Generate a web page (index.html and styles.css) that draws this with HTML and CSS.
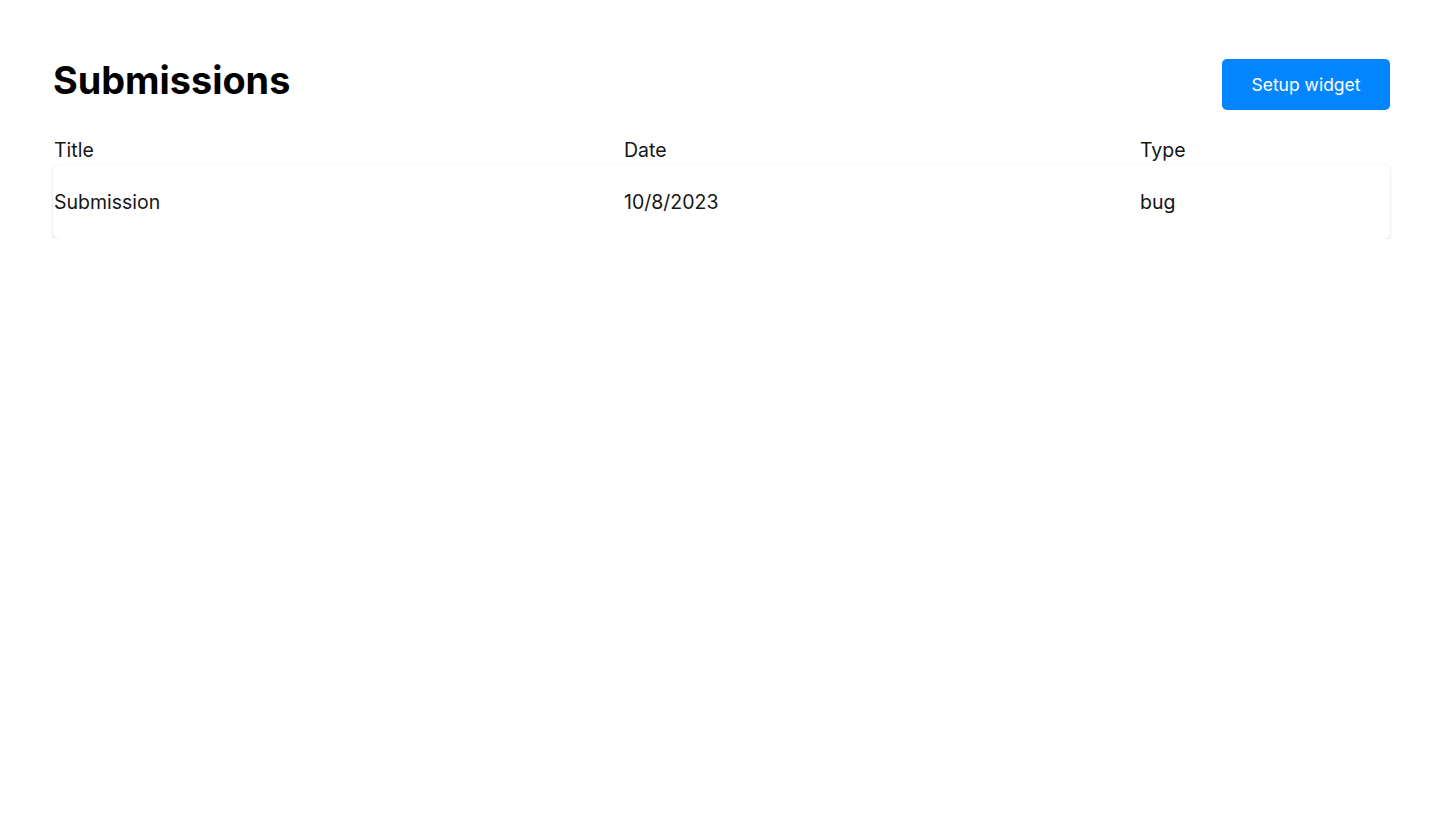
FILE: index.html
```html
<!DOCTYPE html>
<html>
<head>
<meta charset="utf-8">
<link rel="stylesheet" href="styles.css">
</head>
<body>
<main class="page">
  <header class="top">
    <h1 class="title">Submissions</h1>
    <button class="btn">Setup widget</button>
  </header>
  <div class="table">
    <div class="head">
      <span>Title</span><span>Date</span><span>Type</span>
    </div>
    <div class="row">
      <span>Submission</span><span>10/8/2023</span><span>bug</span>
    </div>
  </div>
</main>
</body>
</html>
```
FILE: styles.css
```css
html, body { margin: 0; padding: 0; background: #fff; }
body { font-family: Inter, "Noto Sans", sans-serif; color: #161616; }
.page { padding: 57px 56px 0 53px; }
.top { display: flex; justify-content: space-between; align-items: flex-start; }
.title { margin: 0; font-size: 37.8px; font-weight: 700; line-height: 46px; color: #000; }
.btn {
  margin-top: 2px;
  width: 168px; height: 51px; border: none; border-radius: 5px;
  background: #0285ff; color: #fff; font-family: Inter, sans-serif; font-size: 17.5px;
}
.table { margin-top: 26px; }
.head, .row { display: grid; grid-template-columns: 570px 516px 1fr; padding-left: 1px; font-size: 19.5px; }
.head { line-height: 28px; padding-bottom: 1px; }
.row {
  height: 74px; align-items: center; border-radius: 6px;
  box-shadow: 0 1px 3px rgba(0,0,0,0.16), 0 0 1px rgba(0,0,0,0.06);
}
```
